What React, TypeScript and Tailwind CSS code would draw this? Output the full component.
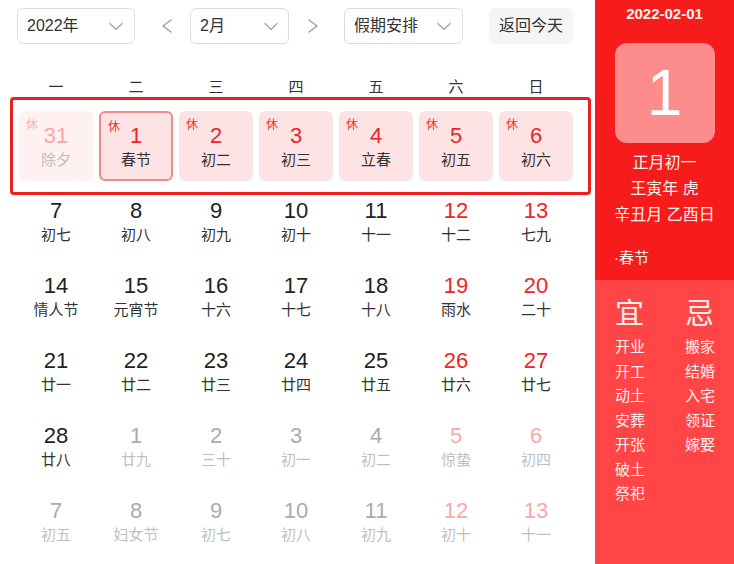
import React from "react";

type Cell = {
  d: string;
  l: string;
  kind: "hol" | "holFade" | "holSel" | "norm" | "wk" | "fade" | "fadeWk";
};

const rows: Cell[][] = [
  [
    { d: "31", l: "除夕", kind: "holFade" },
    { d: "1", l: "春节", kind: "holSel" },
    { d: "2", l: "初二", kind: "hol" },
    { d: "3", l: "初三", kind: "hol" },
    { d: "4", l: "立春", kind: "hol" },
    { d: "5", l: "初五", kind: "hol" },
    { d: "6", l: "初六", kind: "hol" },
  ],
  [
    { d: "7", l: "初七", kind: "norm" },
    { d: "8", l: "初八", kind: "norm" },
    { d: "9", l: "初九", kind: "norm" },
    { d: "10", l: "初十", kind: "norm" },
    { d: "11", l: "十一", kind: "norm" },
    { d: "12", l: "十二", kind: "wk" },
    { d: "13", l: "七九", kind: "wk" },
  ],
  [
    { d: "14", l: "情人节", kind: "norm" },
    { d: "15", l: "元宵节", kind: "norm" },
    { d: "16", l: "十六", kind: "norm" },
    { d: "17", l: "十七", kind: "norm" },
    { d: "18", l: "十八", kind: "norm" },
    { d: "19", l: "雨水", kind: "wk" },
    { d: "20", l: "二十", kind: "wk" },
  ],
  [
    { d: "21", l: "廿一", kind: "norm" },
    { d: "22", l: "廿二", kind: "norm" },
    { d: "23", l: "廿三", kind: "norm" },
    { d: "24", l: "廿四", kind: "norm" },
    { d: "25", l: "廿五", kind: "norm" },
    { d: "26", l: "廿六", kind: "wk" },
    { d: "27", l: "廿七", kind: "wk" },
  ],
  [
    { d: "28", l: "廿八", kind: "norm" },
    { d: "1", l: "廿九", kind: "fade" },
    { d: "2", l: "三十", kind: "fade" },
    { d: "3", l: "初一", kind: "fade" },
    { d: "4", l: "初二", kind: "fade" },
    { d: "5", l: "惊蛰", kind: "fadeWk" },
    { d: "6", l: "初四", kind: "fadeWk" },
  ],
  [
    { d: "7", l: "初五", kind: "fade" },
    { d: "8", l: "妇女节", kind: "fade" },
    { d: "9", l: "初七", kind: "fade" },
    { d: "10", l: "初八", kind: "fade" },
    { d: "11", l: "初九", kind: "fade" },
    { d: "12", l: "初十", kind: "fadeWk" },
    { d: "13", l: "十一", kind: "fadeWk" },
  ],
];

const weekdays = ["一", "二", "三", "四", "五", "六", "日"];
const yi = ["开业", "开工", "动土", "安葬", "开张", "破土", "祭祀"];
const ji = ["搬家", "结婚", "入宅", "领证", "嫁娶"];

function Down() {
  return (
    <svg width="14" height="9" viewBox="0 0 14 9" fill="none">
      <polyline points="1,1.5 7,7.5 13,1.5" stroke="#a3a3a3" strokeWidth="1.3" strokeLinecap="round" strokeLinejoin="round" />
    </svg>
  );
}

function Left() {
  return (
    <svg width="12" height="14" viewBox="0 0 12 14" fill="none">
      <polyline points="10,1 2,7 10,13" stroke="#a0a0a0" strokeWidth="1.5" strokeLinecap="round" strokeLinejoin="round" />
    </svg>
  );
}

function Right() {
  return (
    <svg width="12" height="14" viewBox="0 0 12 14" fill="none">
      <polyline points="2,1 10,7 2,13" stroke="#a0a0a0" strokeWidth="1.5" strokeLinecap="round" strokeLinejoin="round" />
    </svg>
  );
}

function DayCell({ c }: { c: Cell }) {
  const isHol = c.kind === "hol" || c.kind === "holFade" || c.kind === "holSel";
  let box = "";
  let num = "text-[#222]";
  let lun = "text-[#333]";
  if (c.kind === "hol") {
    box = "bg-[#fde3e4]";
    num = "text-[#f02424]";
  } else if (c.kind === "holSel") {
    box = "bg-[#fde3e4] border-2 border-[#f08a8a]";
    num = "text-[#f02424]";
  } else if (c.kind === "holFade") {
    box = "bg-[#fff1f1]";
    num = "text-[#f8a6a6]";
    lun = "text-[#bdbdbd]";
  } else if (c.kind === "wk") {
    num = "text-[#f02424]";
  } else if (c.kind === "fade") {
    num = "text-[#ababab]";
    lun = "text-[#bfbfbf]";
  } else if (c.kind === "fadeWk") {
    num = "text-[#f6a9a9]";
    lun = "text-[#bfbfbf]";
  }
  return (
    <div className={`relative h-[70px] rounded-[6px] flex flex-col items-center ${box}`}>
      {isHol && (
        <span
          className={`absolute top-[6px] left-[7px] text-[12px] leading-[16px] ${
            c.kind === "holFade" ? "text-[#f8b2b2]" : "text-[#f03030]"
          }`}
        >
          休
        </span>
      )}
      <span className={`pt-[13px] text-[22px] leading-[24px] ${num} ${c.kind === "holSel" ? "-mt-[2px]" : ""}`}>{c.d}</span>
      <span className={`mt-[2px] text-[15px] leading-[20px] ${lun}`}>{c.l}</span>
    </div>
  );
}

export default function App() {
  return (
    <div className="flex w-[734px] h-[564px] bg-white overflow-hidden font-['Liberation_Sans','Noto_Sans_CJK_SC',sans-serif]">
      <div className="w-[595px] flex flex-col">
        <div className="h-[52px] flex items-center">
          <div className="ml-[17px] w-[118px] h-[36px] border border-[#dcdcdc] rounded-[6px] flex items-center justify-between pl-[9px] pr-[11px]">
            <span className="text-[16px] text-[#333]">2022年</span>
            <Down />
          </div>
          <div className="ml-[26px] flex items-center">
            <Left />
          </div>
          <div className="ml-[17px] w-[99px] h-[36px] border border-[#dcdcdc] rounded-[6px] flex items-center justify-between pl-[9px] pr-[10px]">
            <span className="text-[16px] text-[#333]">2月</span>
            <Down />
          </div>
          <div className="ml-[18px] flex items-center">
            <Right />
          </div>
          <div className="ml-[25px] w-[119px] h-[36px] border border-[#dcdcdc] rounded-[6px] flex items-center justify-between pl-[9px] pr-[11px]">
            <span className="text-[16px] text-[#333]">假期安排</span>
            <Down />
          </div>
          <div className="ml-[26px] w-[84px] h-[36px] rounded-[6px] bg-[#f5f5f5] flex items-center justify-center">
            <span className="text-[16px] text-[#333]">返回今天</span>
          </div>
        </div>

        <div className="mt-[22px] h-[26px] grid grid-cols-[repeat(7,80px)] pl-[16px]">
          {weekdays.map((w) => (
            <div key={w} className="flex items-center justify-center text-[15px] text-[#333]">
              {w}
            </div>
          ))}
        </div>

        <div className="relative mt-[11px] pl-[19px] grid grid-cols-[repeat(7,74px)] gap-x-[6px] gap-y-[5px]">
          {rows.flat().map((c, i) => (
            <DayCell key={i} c={c} />
          ))}
          <div className="absolute left-[10px] top-[-14px] w-[581px] h-[98px] border-[3px] border-[#ec1f1f] rounded-[4px] pointer-events-none" />
        </div>
      </div>

      <div className="w-[139px] flex flex-col">
        <div className="h-[280px] bg-[#f61c1c] flex flex-col text-[#fff0f0]">
          <div className="pt-[4px] text-center text-[15px] leading-[20px] font-bold">2022-02-01</div>
          <div className="mt-[19px] mx-auto w-[100px] h-[100px] rounded-[12px] bg-[#fd8c8c] flex items-center justify-center">
            <span className="text-[64px] leading-none text-white">1</span>
          </div>
          <div className="mt-[7px] flex flex-col items-center text-[16px] leading-[26px]">
            <span>正月初一</span>
            <span>王寅年 虎</span>
            <span>辛丑月 乙酉日</span>
          </div>
          <div className="mt-[20px] pl-[19px] text-[15px] leading-[20px]">·春节</div>
        </div>
        <div className="flex-1 bg-[#ff4545] pl-[20px] pt-[16px] text-[#fff0f0] grid grid-cols-[70px_1fr] content-start">
          <div className="flex flex-col">
            <span className="text-[29px] leading-[36px]">宜</span>
            <div className="mt-[3px] flex flex-col text-[15px] leading-[24.5px]">
              {yi.map((t) => (
                <span key={t}>{t}</span>
              ))}
            </div>
          </div>
          <div className="flex flex-col">
            <span className="text-[29px] leading-[36px]">忌</span>
            <div className="mt-[3px] flex flex-col text-[15px] leading-[24.5px]">
              {ji.map((t) => (
                <span key={t}>{t}</span>
              ))}
            </div>
          </div>
        </div>
      </div>
    </div>
  );
}
